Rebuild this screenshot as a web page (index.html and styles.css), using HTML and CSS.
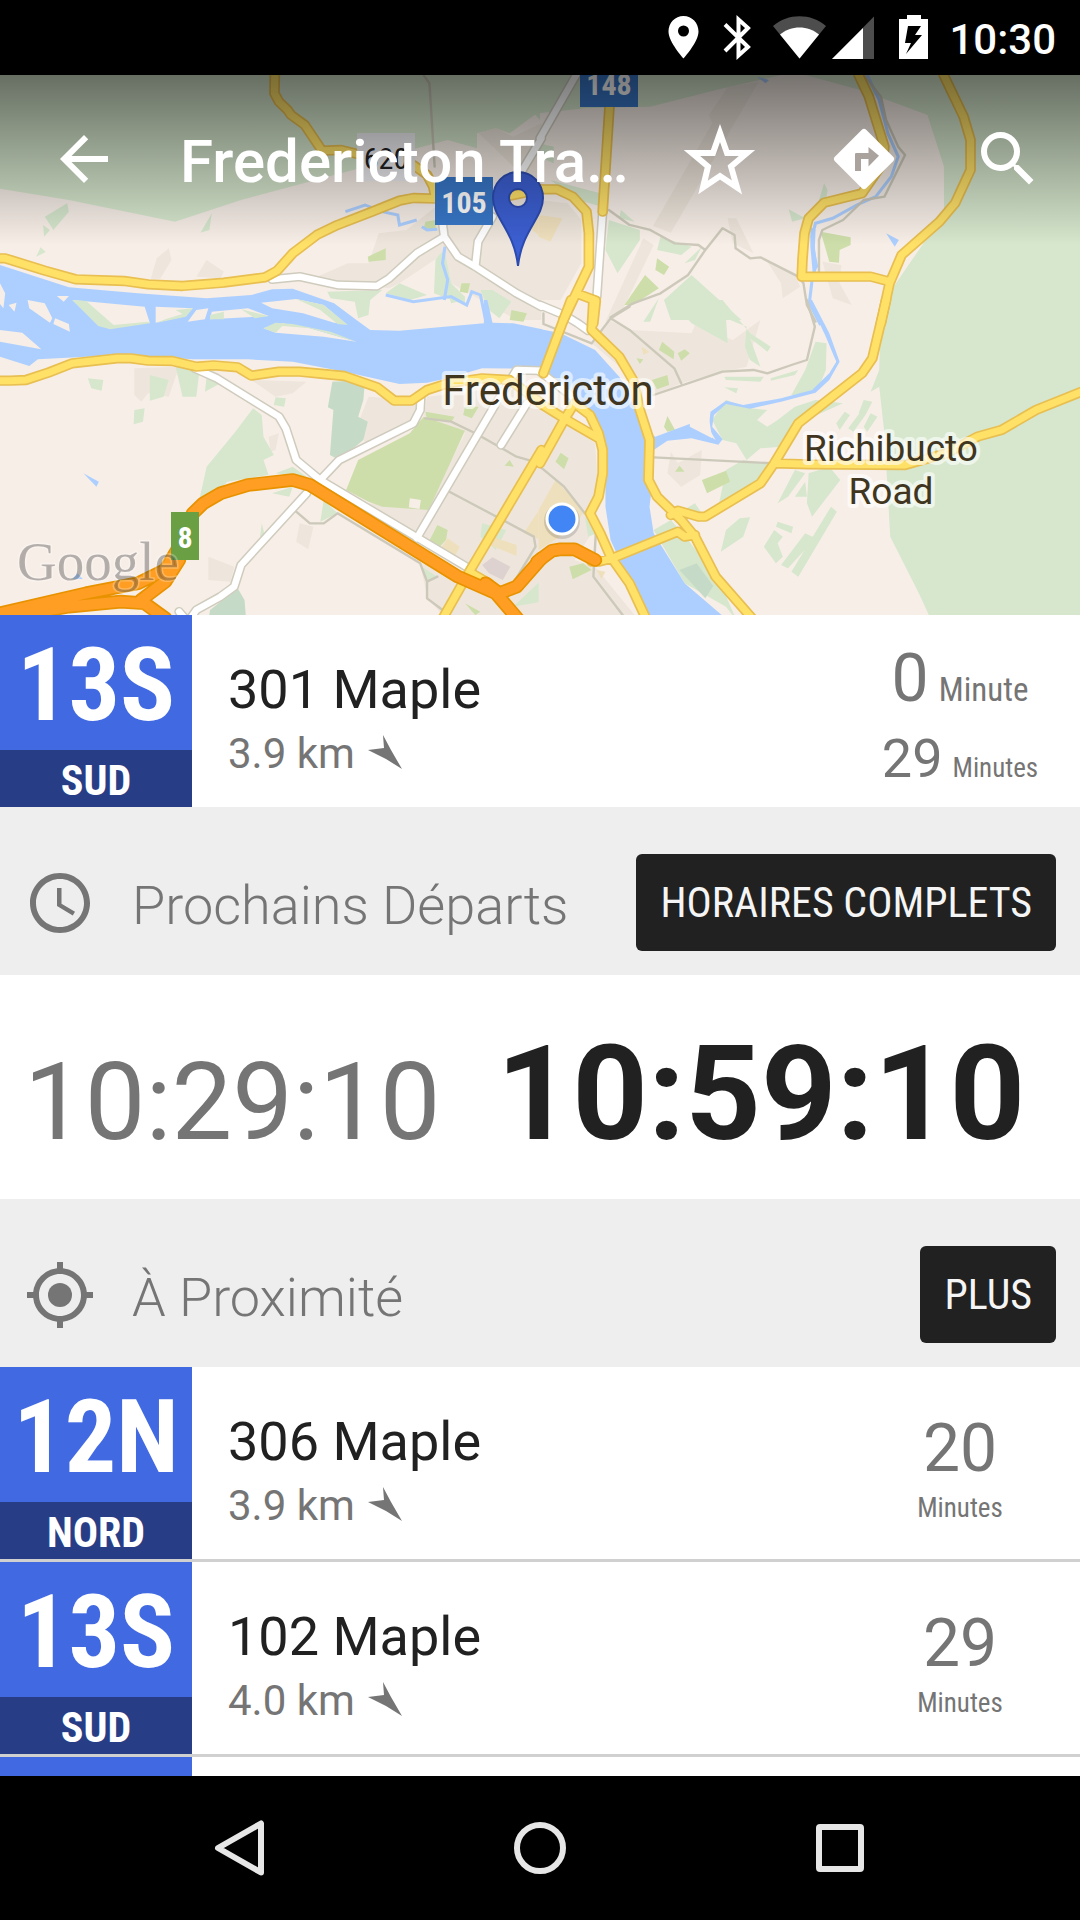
FILE: index.html
```html
<!DOCTYPE html>
<html lang="fr">
<head>
<meta charset="utf-8">
<meta name="viewport" content="width=device-width, initial-scale=1">
<title>Fredericton Transit</title>
<link rel="stylesheet" href="styles.css">
</head>
<body>
<div class="status-bar">
  <svg class="status-icons" viewBox="660 0 276 75" aria-hidden="true">
    <path fill="#fff" fill-rule="evenodd" d="M683.500 16c-8.500 0-15 7-15 15.500C668.500 42 683.500 58.500 683.500 58.500S698.500 42 698.500 31.500C698.500 23 692 16 683.500 16zm0 9.500a5.500 5.500 0 1 1 0 11 5.500 5.500 0 0 1 0-11z"/>
    <path fill="none" stroke="#fff" stroke-width="4" d="M725 24.500 748 47 738.500 55.500V19.500L748 28 725 51"/>
    <path fill="#4d4d4d" d="M773 26C788 13 811 13 826 26L799.500 58.500z"/>
    <path fill="#fff" d="M780 34.500C791 25 808 25 819 34.500L799.500 58.500z"/>
    <path fill="#4d4d4d" d="M874 16.500V59h-42z"/>
    <path fill="#fff" d="M863 28V59h-31z"/>
    <path fill="#fff" fill-rule="evenodd" d="M907 15h14v4h7v40h-29V19h8zM908 26l-3 17h6l-5 11 16-19h-7l6-9z"/>
  </svg>
  <time class="clock">10:30</time>
</div>

<main class="screen">
  <section class="hero">
    <svg class="map" viewBox="0 75 1080 540" preserveAspectRatio="xMidYMid slice" role="img" aria-label="Carte de Fredericton">
      <defs>
        <linearGradient id="shade" x1="0" y1="0" x2="0" y2="1">
          <stop offset="0" stop-color="#000" stop-opacity=".52"/>
          <stop offset="1" stop-color="#000" stop-opacity="0"/>
        </linearGradient>
        <!-- Road network, one group per map tile -->
        <g id="minor">
          <g transform="scale(.3444 .3333)"><path d="M1230 225 1247 250 1262 500"/></g>
          <g transform="translate(540) scale(.3444 .3333)"><path d="M200 630 260 675 320 690 390 730 460 735 480 750 530 685 565 705 568 745 610 775 640 772 750 830 765 850 775 915 800 965M480 750 430 825 350 880 270 910 205 952M940 225 990 290 1005 360 1040 440 1060 465 1000 590 940 600 880 660 820 690 810 720V820"/></g>
          <g transform="translate(0 300) scale(.3444 .3333)"><path d="M1235 355 1310 365 1380 400 1500 470 1568 490M1305 575 1550 710 1555 740 1490 850M860 635 900 670 940 670 980 640 1220 790 1240 845 1270 830M1240 845V895L1285 930"/></g>
          <g transform="translate(540 300) scale(.3444 .3333)"><path d="M775 0 798 80 775 180 730 195 660 220 620 210 530 215 330 285M205 55 260 90 390 205 410 250M260 20 205 55 150 130 10 72V40M330 472 680 490M0 500 70 560 130 640M162 700 155 830 240 945"/></g>
        </g>
        <g id="white">
          <g transform="scale(.3444 .3333)"><path d="M790 838 870 830 980 855 1095 858 1130 835 1210 760 1290 710M1285 670 1290 710 1330 770 1380 800 1500 880 1572 920M1380 800 1388 725 1430 650M1500 540 1572 415"/></g>
          <g transform="translate(540) scale(.3444 .3333)"><path d="M105 225 0 415M182 635 165 890"/></g>
          <g transform="translate(0 300) scale(.3444 .3333)"><path d="M565 205 630 235 810 350 830 385 860 480 930 540 1370 810M930 540 985 480 1200 370 1220 330 1222 295M1210 715 1440 310 1500 210 1572 212M1455 435 1530 310M890 580 700 795 680 860 640 890 570 930 550 960M520 935 545 965"/></g>
          <g transform="translate(540 300) scale(.3444 .3333)"><path d="M0 15 70 45 110 70 140 92M0 215 100 295"/></g>
        </g>
        <g id="yellow">
          <g transform="scale(.3444 .3333)"><path d="M-20 775H15L130 812 220 838 360 843 430 853 530 858 650 848 770 832 805 812 850 760 920 705 980 675 1080 635 1160 602 1200 594 1270 596 1430 598 1572 568M798 225 797 280 810 305 835 330 845 345 885 375 935 452 990 450 1030 460 1200 495 1240 525 1258 560 1265 596"/></g>
          <g transform="translate(540) scale(.3444 .3333)"><path d="M0 568H50L95 590 135 635 142 700V800L105 880 68 960M202 225V315L182 635M105 880 162 902 155 970M925 225 955 290 1000 440 995 490 935 580 825 608 780 655 768 700 762 780 760 830H960L1015 845M1172 225 1230 350 1250 420V510L1205 610 1160 665 1050 765 1015 850 990 970"/></g>
          <g transform="translate(0 300) scale(.3444 .3333)"><path d="M-20 242H30L75 240 140 218 210 190 340 175 380 175 430 182 500 183 570 200 620 196 690 202 730 227 810 215 870 215 940 222 1000 228 1095 262 1145 302 1195 302 1240 270 1300 250 1400 235 1480 240 1572 310M1572 450 1360 820 1280 965M1370 820 1420 850"/></g>
          <g transform="translate(540 300) scale(.3444 .3333)"><path d="M0 310 70 355 170 415M90 0 10 220M0 490 70 360 100 310 145 345 170 400 182 450V520L170 590 145 640 175 700 205 770 260 850 310 960M155 0 150 90 230 170 270 240 290 330 318 420 315 540 340 590 410 660 450 710 510 830 620 960M1005 0 965 175 935 220 750 370 680 490 640 550 480 650H460L400 632 380 645M680 490 780 493 1060 495 1180 460 1270 410 1340 390 1440 330 1580 272M150 785H170L210 775 400 695 420 710 450 705"/></g>
        </g>
        <g id="highway">
          <g transform="translate(0 300) scale(.3444 .3333)"><path d="M-20 945 250 880 400 850 480 810 520 740 560 640 590 610 640 580 720 555 850 540 900 555 1330 830 1440 880 1510 965M-20 958 200 920 350 905 420 910 480 955M410 900 480 845 520 780M1410 850 1450 880 1500 860 1572 775"/></g>
          <g transform="translate(540 300) scale(.3444 .3333)"><path d="M-8 785 35 752 60 748H100L160 780"/></g>
        </g>
      </defs>

      <!-- Parks, built-up areas and water -->
      <rect class="land" y="75" width="1080" height="540"/>
      <g transform="scale(.3444 .3333)">
        <path class="park" d="M0 225V566L200 600 508 665 700 600 1060 500 1210 445 1300 420 1385 445V400L1440 385 1480 400 1572 330V225zM195 610 200 635 155 690 130 650zM125 675 145 690 128 710zM118 742 133 756 105 770zM615 640 608 690 582 698zM950 875 1110 870 1075 900 1070 945 1040 955 1030 905 960 895zM1120 880 1160 850 1240 885 1190 900zM1265 770 1290 740 1300 840 1350 890 1350 915 1260 880z"/>
        <path class="urban" d="M1390 400 1440 385 1490 410 1572 370V960H1500L1310 850 1290 760 1160 850 1130 865 900 840 1010 790 1070 790 1100 700 1180 690 1290 600 1572 580zM490 745 498 780 465 836 438 836 455 775zM600 780 650 815 640 835 570 830z"/>
        <path class="park" d="M1395 870 1430 870 1485 905 1450 955 1420 930zM1550 340 1568 320V360zM1270 770 1290 750 1310 850 1350 900 1310 910z"/>
        <path class="grass" d="M1068 770 1120 745V780L1070 785zM1340 850 1365 850 1358 880 1335 875zM1485 930 1530 940 1520 965 1480 960zM1235 665 1265 660V690L1230 688z"/>
        <path class="sand" d="M1540 650 1572 645V710L1530 680z"/>
        <path class="stream" d="M1003 635 1060 615 1110 635 1155 645 1160 675 1210 660M1225 680 1240 690 1270 688M1292 740 1285 790 1300 840 1290 900M1120 885 1200 905 1310 890 1355 915 1370 875 1395 885 1410 960"/>
      </g>
      <g transform="translate(540) scale(.3444 .3333)">
        <path class="park" d="M-4 225H700L520 268 320 320 130 325-4 340zM770 225H1572V965H990L1020 870 1100 750 1173 640V500L1125 345 930 270zM-4 430 40 440 40 490-4 470zM30 540 175 580 180 620 110 600zM235 630 275 665 230 655zM200 660 290 690 290 720 225 820 190 750zM350 710 440 740 410 765 340 750zM420 790 470 740 450 780zM440 825 585 960H380L360 900zM825 550 835 570 830 600 810 600zM722 628 770 655 732 665zM345 895 320 965H300z"/>
        <path class="urban" d="M-4 600 80 610 120 660 120 790 60 900-4 900zM190 965 300 715 330 735 240 930 205 965zM545 655 570 655 620 760 560 730zM660 785 740 820 755 860 705 895 700 850zM820 785 875 795 870 850 905 915 850 895zM545 262 635 245 380 698 328 678 500 370 490 345z"/>
        <path class="grass" d="M815 695 902 712V735L870 750 868 788 840 785zM340 775 375 800 360 825 335 810zM305 825 345 865 270 915 245 915z"/>
        <path class="sand" d="M-4 645 65 655 30 725-4 710z"/>
        <path class="stream" d="M950 225 985 300 1010 400 1040 470 1020 530 975 590 920 615 850 655 800 670 790 710 800 800 790 840 782 910 815 975"/>
        <path class="water" d="M630 230 665 240 655 250zM1005 700 1042 720 1030 740zM785 680 800 690 798 750 808 800 792 820 785 740z"/>
      </g>
      <g transform="translate(0 300) scale(.3444 .3333)">
        <path class="urban" d="M390 205 520 200 490 290 430 280 410 305 390 285zM730 240 890 245 850 280 800 290zM1070 290 1200 300 1220 330 1200 370 1060 430 1040 370zM1240 290 1572 250V965H1300L1240 890 1220 790 1420 850 1200 700 1070 610 1240 625 1350 400 1230 350zM780 410 810 400 800 450 785 455zM605 770 680 800 670 845 605 840zM870 670 910 680 895 748 860 725z"/>
        <path class="park" d="M255 235 300 240 295 272 265 265zM390 330 420 325 415 365 388 373zM435 225 490 240 475 290 435 302zM510 200 580 205 570 290 530 290zM600 230 640 250 595 275zM800 292 830 295 825 320 795 315zM735 325 760 345 765 410 795 465 765 480 780 525 660 545 570 640 600 500 680 400zM790 580 850 560 840 590zM800 520 850 500 890 530zM940 600 980 640 930 665zM760 670 770 710 755 710zM1400 670 1470 690 1440 750 1395 710zM1490 920 1572 840V905zM1225 800 1270 830 1240 845z"/>
        <path class="forest" d="M965 245 1060 240 1055 300 1040 350 1068 365 1055 420 985 480 958 465 968 330 952 322zM690 865 710 900 715 965H605L610 930z"/>
        <path class="grass" d="M1230 350 1350 392 1245 630 1110 620 1070 605 1005 570 1040 480 1190 400zM1235 335 1320 350 1310 365 1240 360zM1350 320 1390 320 1370 355 1345 345zM1270 675 1300 690 1295 720 1275 742 1245 725zM1350 910 1395 935 1380 945zM1480 480 1492 500 1465 497z"/>
        <path class="sand" d="M1300 715 1335 740 1320 770 1280 745zM1520 700 1572 620V720zM1430 710 1500 735 1500 768 1420 735z"/>
        <path class="campus" d="M1400 795 1430 772 1482 800 1460 840 1420 820z"/>
        <path class="land" d="M1190 595 1222 600 1218 627 1187 622z"/>
        <path class="water" d="M0-105 200-38 400-20 600-5 730-15 790-32 850-34 970 10 1035 60 1075 90 1160 92 1405 70 1405 0 1415 0 1430 68 1490 70 1574 88V206L1400 205 1300 235 1240 248 1160 252 1000 215 850 185 720 178 560 178 350 165 110 178 85 198 0 170zM242 520 287 545 280 560zM225 820 240 837 210 837z"/>
        <path class="land" d="M0-50 15-20 10 25 0 12zM25 15 48 8 42 35zM80 0 130 10 152 55 145 68 85 25zM0 90 65 98 120 148 0 125zM165-12 200-12 185 5zM160 55 200 72 203 95 155 72zM210 0 420 20 435 68 320 85 285 75zM452 20 560 25 530 50 452 68zM570 30 605 25 595 58 545 65zM615 35 720 25 780 48 610 58zM758 8 860-3 940 15 1005 72 970 68 880 40 790 25zM765 85 820 70 900 85 1035 125 940 110 800 98z"/>
        <path class="park" d="M210 0 250 3 330 75 430 65 435 70 320 88 285 78zM510 30 560 25 540 50 455 68 480 58 530 42zM610 45 650 35 650 58H610zM700 28 780 48 740 55zM860-3 940 15 1010 75 980 72 930 30zM765 85 800 68 850 72 960 95 1035 125 900 85 820 78 800 98z"/>
      </g>
      <g transform="translate(540 300) scale(.3444 .3333)">
        <path class="urban" d="M-4 330 60 360 160 430 170 590 150 700 100 780 160 800 290 965H-4zM150 130 200 60 260 90 440 100 450 75 560 120 640 60 600 200 530 215 410 250 330 285zM380 455 400 490 470 450 465 525 410 560 370 520z"/>
        <path class="park" d="M380 0H530L610 100 670 140 660 155 610 115 640 200 610 180 595 140 600 80 540 55 545 130 440 70zM990 0H1572V965H1138L1100 880 1017 710 1000 400 985 260 960 275 985 210zM800 125 832 130 830 210 810 260 745 290 730 285 770 210zM535 230 650 230 640 245 540 240zM670 235 750 210 740 225 670 242zM535 262 575 265 570 280zM540 300 610 325 660 330 630 360 660 380 690 360 740 320 800 300 880 310 750 370 700 440 640 445 600 480 570 430 530 420 500 360zM590 480 670 490 640 550 520 610 540 510zM400 640 450 610 470 640zM330 690 380 660 430 720 520 840 570 960 540 920 420 850zM525 755 540 690 580 655 610 652 590 710zM650 740 680 690 705 710 690 730 705 770 685 790zM690 665 735 680 730 700 685 680zM700 795 770 700 800 715 720 805zM730 815 845 620 862 635 750 830zM690 610 740 510 770 520 720 590zM780 520 840 500 872 540 790 650 775 610zM740 590 770 545 775 590zM860 370 885 335 900 345 870 390zM895 385 935 330 945 345 910 395zM925 340 940 300 965 305 945 345zM940 380 960 340 980 350 950 395zM130 650 165 700 140 710z"/>
        <path class="grass" d="M345 150 355 125 390 155 388 178zM400 160 420 148 435 160 410 182zM325 240 370 225 375 255 340 268zM360 380 370 348 392 390 370 395zM45 485 60 458 83 475 70 508zM392 515 405 497 420 515zM470 540 540 512 552 545 485 580zM85 800 125 790 150 810 95 838zM280 175 300 178 290 192z"/>
        <path class="forest" d="M405 810 455 790 503 858 480 895z"/>
        <path class="sand" d="M45 540 100 600 125 640 90 690-4 750V630zM295 140 318 155 300 165zM165 810 190 815 178 838z"/>
        <path class="water" d="M-4 86 60 100 160 150 230 230 290 330 318 400 335 410 440 370 510 420 490 385 495 335 540 302 590 315 700 295 790 270 840 220 860 185 830 110 780 0 790 0 840 100 870 185 840 240 800 278 700 305 610 326 540 312 505 345 500 380 530 418 518 434 440 415 370 422 330 450V510L318 620 330 700 420 850 550 965H320L240 800 205 720 190 620V450L150 350-4 220z"/>
        <path class="land" d="M848 160 860 185 840 215 835 190zM445 305 435 320V380L500 415 490 350z"/>
      </g>

      <use href="#minor" class="road minor"/>
      <use href="#white" class="road white-case"/>
      <use href="#white" class="road white-fill"/>
      <use href="#yellow" class="road yellow-case"/>
      <use href="#yellow" class="road yellow-fill"/>
      <use href="#highway" class="road highway-case"/>
      <use href="#highway" class="road highway-fill"/>

      <rect x="357" y="133" width="58" height="48" fill="#eeeef2"/>
      <text class="shield shield-plain" x="386" y="169">620</text>
      <rect x="435" y="177" width="58" height="48" fill="#3877c8"/>
      <text class="shield" x="464" y="213">105</text>
      <rect x="580" y="59" width="58" height="48" fill="#3877c8"/>
      <text class="shield" x="609" y="95">148</text>
      <rect x="171" y="512" width="28" height="48" fill="#6aa043"/>
      <text class="shield" x="185" y="548">8</text>
      <text class="place" x="548" y="405">Fredericton</text>
      <text class="place place-small" x="891" y="461">Richibucto</text>
      <text class="place place-small" x="891" y="504">Road</text>
      <text class="google" x="17" y="580">Google</text>
      <circle cx="562" cy="521" r="18" fill="#000" opacity=".14"/>
      <circle cx="562" cy="519" r="15" fill="#4285f4" stroke="#fff" stroke-width="3"/>
      <path class="pin" fill-rule="evenodd" d="M518 172c-14 0-25 11-25 26 0 20 21 32 25 68 4-36 25-48 25-68 0-15-11-26-25-26zm0 17a9 9 0 1 1 0 18 9 9 0 0 1 0-18z"/>
      <rect y="75" width="1080" height="170" fill="url(#shade)"/>
    </svg>

    <header class="app-bar">
      <button class="icon-button" aria-label="Retour"><svg viewBox="0 0 24 24"><path d="M20 11H7.830l5.590-5.590L12 4l-8 8 8 8 1.410-1.410L7.830 13H20v-2z"/></svg></button>
      <h1 class="app-title">Fredericton Tra…</h1>
      <button class="icon-button" aria-label="Favori"><svg viewBox="0 0 72 72"><path fill="none" stroke="#fff" stroke-width="6" d="M36 10 43 30H63L47 43.500 53 64.500 36 53 19 64.500 24 43.500 8 30H29z"/></svg></button>
      <button class="icon-button" aria-label="Itinéraire"><svg viewBox="0 0 24 24"><path d="M21.710 11.290l-9-9a1 1 0 0 0-1.420 0l-9 9a1 1 0 0 0 0 1.420l9 9a1 1 0 0 0 1.420 0l9-9a1 1 0 0 0 0-1.420z"/><path fill="#aaa29d" d="M13.500 14.500V12h-2.500v4H9v-5.500c0-.400.200-.500.500-.500h4V8l3.500 2.900z"/></svg></button>
      <button class="icon-button" aria-label="Rechercher"><svg viewBox="0 0 24 24"><path d="M15.500 14h-.790l-.280-.270A6.470 6.470 0 0 0 16 9.500 6.500 6.500 0 1 0 9.500 16c1.610 0 3.090-.590 4.230-1.570l.270.280v.790l5 4.990L20.490 19l-4.990-5zm-6 0C7.010 14 5 11.990 5 9.500S7.010 5 9.500 5 14 7.010 14 9.500 11.990 14 9.500 14z"/></svg></button>
    </header>
  </section>

  <article class="stop">
    <div class="badge"><span class="badge-code">13S</span><span class="badge-way">SUD</span></div>
    <div class="stop-info">
      <h2 class="stop-name">301 Maple</h2>
      <p class="stop-distance">3.9 km <svg class="heading" viewBox="0 0 36 36" aria-hidden="true"><path d="M1 16 17 14 16 1 24 16 35 35 19 25z"/></svg></p>
    </div>
    <div class="waits">
      <p class="wait"><span class="count">0</span> <span class="unit unit-large">Minute</span></p>
      <p class="wait"><span class="count count-small">29</span> <span class="unit">Minutes</span></p>
    </div>
  </article>

  <section>
    <header class="section-bar">
      <svg class="section-icon" viewBox="0 0 24 24" aria-hidden="true"><path d="M11.990 2C6.470 2 2 6.480 2 12s4.470 10 9.990 10C17.520 22 22 17.520 22 12S17.520 2 11.990 2zM12 20c-4.420 0-8-3.580-8-8s3.580-8 8-8 8 3.580 8 8-3.580 8-8 8zM12.500 7H11v6l5.250 3.150.750-1.230-4.500-2.670z"/></svg>
      <h2 class="section-title">Prochains Départs</h2>
      <button class="action">HORAIRES COMPLETS</button>
    </header>
    <div class="departures">
      <time class="departure-past">10:29:10</time>
      <time class="departure-next">10:59:10</time>
    </div>
  </section>

  <section>
    <header class="section-bar">
      <svg class="section-icon" viewBox="0 0 24 24" aria-hidden="true"><circle cx="12" cy="12" r="4"/><path d="M20.940 11A8.994 8.994 0 0 0 13 3.060V1h-2v2.060A8.994 8.994 0 0 0 3.060 11H1v2h2.060A8.994 8.994 0 0 0 11 20.940V23h2v-2.060A8.994 8.994 0 0 0 20.940 13H23v-2h-2.060zM12 19c-3.870 0-7-3.130-7-7s3.130-7 7-7 7 3.130 7 7-3.130 7-7 7z"/></svg>
      <h2 class="section-title">À Proximité</h2>
      <button class="action">PLUS</button>
    </header>
    <ul class="nearby">
      <li class="stop">
        <div class="badge"><span class="badge-code">12N</span><span class="badge-way">NORD</span></div>
        <div class="stop-info">
          <h3 class="stop-name">306 Maple</h3>
          <p class="stop-distance">3.9 km <svg class="heading" viewBox="0 0 36 36" aria-hidden="true"><path d="M1 16 17 14 16 1 24 16 35 35 19 25z"/></svg></p>
        </div>
        <p class="wait-stack"><span class="count">20</span><span class="unit">Minutes</span></p>
      </li>
      <li class="stop">
        <div class="badge"><span class="badge-code">13S</span><span class="badge-way">SUD</span></div>
        <div class="stop-info">
          <h3 class="stop-name">102 Maple</h3>
          <p class="stop-distance">4.0 km <svg class="heading" viewBox="0 0 36 36" aria-hidden="true"><path d="M1 16 17 14 16 1 24 16 35 35 19 25z"/></svg></p>
        </div>
        <p class="wait-stack"><span class="count">29</span><span class="unit">Minutes</span></p>
      </li>
      <li class="stop"><div class="badge"></div></li>
    </ul>
  </section>
</main>

<nav class="nav-bar">
  <button class="nav-button" aria-label="Retour"><svg viewBox="0 0 72 72"><path d="M57 11.500V60.500L14 36z"/></svg></button>
  <button class="nav-button" aria-label="Accueil"><svg viewBox="0 0 72 72"><circle cx="36" cy="36" r="23"/></svg></button>
  <button class="nav-button" aria-label="Applications"><svg viewBox="0 0 72 72"><rect x="15" y="15" width="42" height="42" rx="1"/></svg></button>
</nav>
</body>
</html>
```

FILE: styles.css
```css
* {
  box-sizing: border-box;
  margin: 0;
  padding: 0;
}

body {
  --condensed: "Roboto Condensed", "Liberation Sans Narrow", Roboto, sans-serif;
  display: flex;
  flex-direction: column;
  height: 100vh;
  font-family: Roboto, sans-serif;
  color: #212121;
  background: #fff;
}

button {
  border: 0;
  background: none;
  font: inherit;
  color: inherit;
  cursor: pointer;
}

ul {
  list-style: none;
}

/* System bars */
.status-bar {
  display: flex;
  flex: none;
  align-items: center;
  justify-content: flex-end;
  gap: 13px;
  height: 75px;
  padding-right: 24px;
  background: #000;
  color: #fff;
}

.status-icons {
  width: 276px;
  height: 75px;
}

.clock {
  font-size: 42px;
  font-weight: 500;
  line-height: 75px;
  padding-top: 3px;
}

.nav-bar {
  display: flex;
  flex: none;
  align-items: center;
  justify-content: center;
  gap: 156px;
  height: 144px;
  background: #000;
}

.nav-button {
  display: grid;
  place-items: center;
  width: 144px;
  height: 144px;
}

.nav-button svg {
  width: 72px;
  height: 72px;
  fill: none;
  stroke: #e6e6e6;
  stroke-width: 6;
  stroke-linejoin: round;
}

.screen {
  flex: 1;
  min-height: 0;
  overflow: hidden;
}

/* Map */
.hero {
  position: relative;
}

.map {
  display: block;
  width: 100%;
  height: 540px;
}

.land { fill: #f7eee7; }
.urban { fill: #eee6dc; }
.park { fill: #d6e7cd; }
.forest { fill: #c5dbc7; }
.grass { fill: #cddeaa; }
.sand { fill: #efe0bd; }
.campus { fill: #ddd2cf; }
.water { fill: #accfff; }

.stream {
  fill: none;
  stroke: #accfff;
  stroke-width: 9;
}

.road {
  fill: none;
  stroke-linecap: round;
  stroke-linejoin: round;
}

.minor { stroke: #ccc9ba; stroke-width: 7; }
.white-case { stroke: #cfccbe; stroke-width: 28; }
.white-fill { stroke: #fff; stroke-width: 19; }
.yellow-case { stroke: #e8bf50; stroke-width: 31; }
.yellow-fill { stroke: #ffe168; stroke-width: 21; }
.highway-case { stroke: #e89200; stroke-width: 41; }
.highway-fill { stroke: #ff9e22; stroke-width: 31; }

.shield {
  font-family: var(--condensed);
  font-size: 30px;
  font-weight: 700;
  text-anchor: middle;
  fill: #fff;
}

.shield-plain {
  font-weight: 400;
  fill: #222;
}

.place {
  font-size: 42px;
  text-anchor: middle;
  fill: #40361f;
  stroke: #fff;
  stroke-opacity: .6;
  stroke-width: 8;
  stroke-linejoin: round;
  paint-order: stroke;
}

.place-small {
  font-size: 37px;
}

.google {
  font-family: "Liberation Serif", serif;
  font-size: 55px;
  fill: #000;
  fill-opacity: .28;
  stroke: #fff;
  stroke-opacity: .25;
  stroke-width: 3;
  paint-order: stroke;
}

.pin {
  fill: #3c5fd2;
  stroke: #2c4bb0;
  stroke-width: 2;
}

.app-bar {
  position: absolute;
  top: 0;
  left: 0;
  display: flex;
  align-items: center;
  width: 100%;
  height: 168px;
  padding-left: 12px;
  color: #fff;
}

.icon-button {
  display: grid;
  flex: none;
  place-items: center;
  width: 144px;
  height: 144px;
}

.icon-button svg {
  width: 72px;
  height: 72px;
  fill: currentColor;
}

.app-title {
  flex: 1;
  padding: 5px 0 0 24px;
  font-size: 60px;
  font-weight: 500;
  line-height: 72px;
  white-space: nowrap;
}

/* Stop rows */
.stop {
  display: flex;
  height: 192px;
  background: #fff;
}

.nearby .stop {
  height: 195px;
  border-bottom: 3px solid #d0d0d0;
}

.badge {
  display: flex;
  flex: none;
  flex-direction: column;
  width: 192px;
  background: #4169e1;
  color: #fff;
  font-family: var(--condensed);
  font-weight: 700;
  text-align: center;
}

.badge-code {
  height: 135px;
  font-size: 102px;
  line-height: 141px;
}

.badge-way {
  height: 57px;
  background: #273e87;
  font-size: 42px;
  line-height: 62px;
}

.stop-info {
  flex: 1;
  padding: 39px 0 0 36px;
}

.stop-name {
  font-size: 54px;
  font-weight: 400;
  line-height: 72px;
}

.stop-distance {
  display: flex;
  align-items: center;
  gap: 12px;
  color: #757575;
  font-size: 42px;
  line-height: 56px;
}

.heading {
  width: 36px;
  height: 36px;
  margin-bottom: 4px;
  fill: #757575;
}

.waits,
.wait-stack {
  display: flex;
  flex: none;
  flex-direction: column;
  align-items: center;
  width: 240px;
  color: #757575;
}

.waits {
  padding-top: 24px;
}

.wait {
  display: flex;
  align-items: baseline;
  gap: 10px;
  line-height: 80px;
}

.wait-stack {
  padding-top: 44px;
}

.count {
  font-size: 66px;
  line-height: inherit;
}

.wait-stack .count {
  line-height: 76px;
}

.count-small {
  font-size: 54px;
}

.unit {
  font-family: var(--condensed);
  font-size: 27px;
  line-height: 42px;
}

.unit-large {
  font-size: 33px;
}

/* Section bars */
.section-bar {
  display: flex;
  align-items: center;
  height: 168px;
  padding: 47px 24px 24px;
  background: #eee;
  color: #757575;
}

.section-icon {
  flex: none;
  width: 72px;
  height: 72px;
  fill: #757575;
}

.section-title {
  flex: 1;
  padding: 6px 0 0 36px;
  font-size: 54px;
  font-weight: 300;
  line-height: 72px;
}

.action {
  height: 97px;
  padding: 0 24px;
  border-radius: 6px;
  background: #212121;
  color: #f5f5f5;
  font-family: var(--condensed);
  font-size: 42px;
}

.departures {
  display: flex;
  align-items: baseline;
  gap: 56px;
  height: 224px;
  padding: 42px 24px 0;
}

.departure-past {
  color: #757575;
  font-size: 108px;
}

.departure-next {
  font-size: 132px;
  font-weight: 700;
}
```
